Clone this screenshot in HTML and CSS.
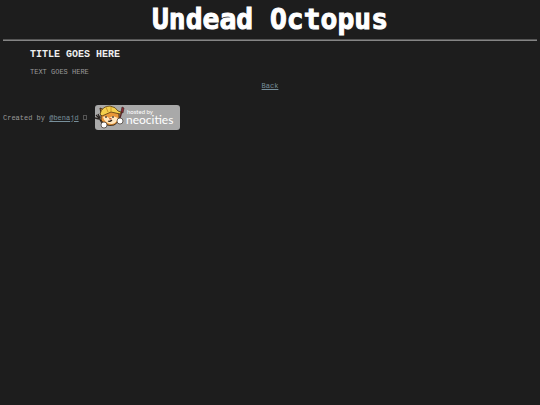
FILE: index.html
```
<!DOCTYPE html>
<html lang="en">
    <head>
        <meta charset="UTF-8">
        <meta name="viewport" content="width=device-width, initial-scale=1.0">
        <title>Undead Octopus</title>
        <link rel="stylesheet" href="styles.css">
    </head>

    <body>
        <header class="header">
            <h1 class="site-title">Undead Octopus</h1>
        </header>
        <hr class="rule">

        <main class="post">
            <h2 class="post-title">TITLE GOES HERE</h2>
            <p class="post-text">TEXT GOES HERE</p>
        </main>

        <nav class="back">
            <a href="index.html">Back</a>
        </nav>

        <footer class="footer">
            <p class="credit">Created by <a href="#">@benajd</a> <span class="box"></span></p>
            <a class="badge" href="#" aria-label="hosted by neocities">
                <svg width="85" height="25" viewBox="0 0 85 25">
                    <rect width="85" height="25" rx="3" fill="#a9a9a9"/>
                    <!-- fork -->
                    <path d="M1 10l3 3M3 9l2 4M0 13l4 1M4 13l3 5" stroke="#28221f" stroke-width="1.3" fill="none"/>
                    <!-- brush -->
                    <path d="M24 16l3-10" stroke="#5a2828" stroke-width="1.5"/>
                    <path d="M26 7l1-5 2 1-1 5z" fill="#8f2b32" stroke="#382222" stroke-width=".6"/>
                    <!-- cat -->
                    <path d="M6 9l-1-6 4 2q6-5 12 0l3 4q1 8-5 11-9 2-13-5z" fill="#e99739" stroke="#3b2817"/>
                    <path d="M8 12q3-2 6 1l4-2 5 2q-1 5-6 6-7 0-9-7z" fill="#ffe6bd"/>
                    <path d="M5 9q2-8 10-8 6 1 8 5l3 1-1 2-9-2-9 4z" fill="#f4cf4c" stroke="#533911" stroke-width=".8"/>
                    <path d="M11 2l2 5M16 2v5" stroke="#bd8621" stroke-width=".8"/>
                    <path d="M11 11v2M18 11v2M13 16q2 1 4-1" stroke="#2a2019" stroke-width="1.2" fill="none"/>
                    <path d="M14 13h3l-2 2z" fill="#c45532"/>
                    <circle cx="9" cy="20" r="3" fill="#fff" stroke="#342b24" stroke-width=".7"/>
                    <circle cx="25" cy="16" r="3" fill="#fff" stroke="#342b24" stroke-width=".7"/>
                    <text class="badge-small" x="32" y="9">hosted by</text>
                    <text class="badge-name" x="31" y="19">neocities</text>
                </svg>
            </a>
        </footer>
    </body>
</html>
```
FILE: styles.css
```
body {
  margin: 0;
  padding: 5px 3px;
  background: #1d1d1d;
  color: #999;
  font-family: "Liberation Mono", "Courier New", monospace;
  font-size: 7px;
  line-height: 8px;
}

a {
  color: #778f9b;
}

.header {
  text-align: center;
}

.site-title {
  margin: 0;
  color: #fff;
  font-family: "DejaVu Sans Mono", monospace;
  font-size: 28px;
  line-height: 30px;
  -webkit-text-stroke: 1px #fff;
}

.rule {
  margin: 4px 0 0;
  border: 0;
  border-top: 1px solid #555;
  border-bottom: 1px solid #858585;
}

.post {
  padding: 8px 27px 0;
}

.post-title {
  margin: 0 0 7px;
  color: #eee;
  font-size: 10px;
  line-height: 12px;
}

.post-text {
  margin: 0;
}

.back {
  margin-top: 6px;
  text-align: center;
}

.footer {
  display: flex;
  align-items: center;
  gap: 8px;
  margin-top: 15px;
}

.credit {
  margin: 0;
}

.box {
  display: inline-block;
  box-sizing: border-box;
  width: 4px;
  height: 5px;
  border: 1px solid #555;
}

.badge svg {
  display: block;
}

.badge text {
  fill: #fff;
  font-family: Lato, sans-serif;
}

.badge .badge-small {
  font-size: 6px;
}

.badge .badge-name {
  font-size: 12px;
}
```
